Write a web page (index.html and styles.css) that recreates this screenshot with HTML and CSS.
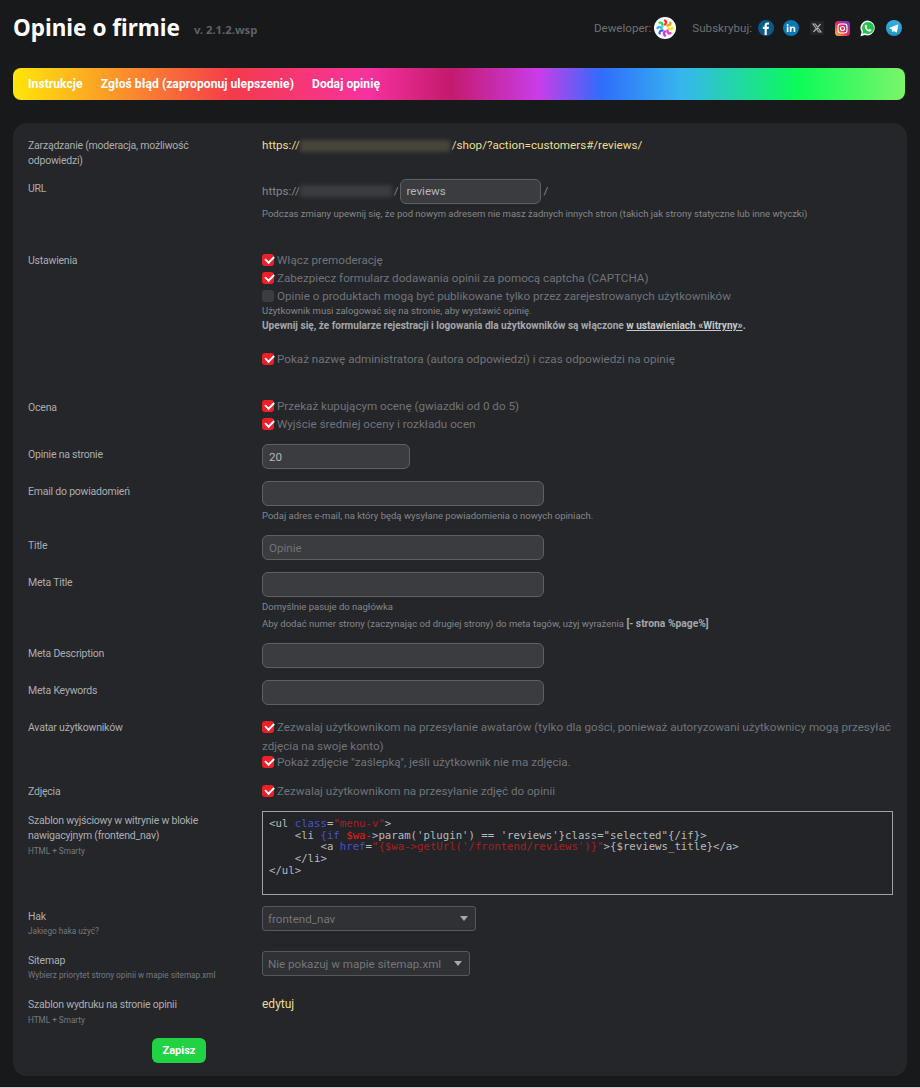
FILE: index.html
```html
<!DOCTYPE html>
<html lang="pl">
<head>
<meta charset="utf-8">
<title>Opinie o firmie</title>
<link rel="stylesheet" href="styles.css">
</head>
<body>
<div class="page">
<header class="top">
  <h1 class="title">Opinie o firmie</h1>
  <span class="version">v. 2.1.2.wsp</span>
  <div class="top-right">
    <span class="top-label">Deweloper:</span>
    <svg class="logo" width="22" height="22" viewBox="0 0 22 22">
      <circle cx="11" cy="11" r="11" fill="#fff"/>
      <g fill="none" stroke-width="2.4" stroke-linecap="round">
        <path d="M11 3.500c1.500 1 1.500 2.500 0 4" stroke="#f33"/>
        <path d="M16.300 5.700c.4 1.800-.6 2.800-2.800 2.800" stroke="#f90"/>
        <path d="M18.500 11c-1 1.500-2.500 1.500-4 0" stroke="#ee0"/>
        <path d="M16.300 16.300c-1.800.4-2.800-.6-2.800-2.800" stroke="#e3c"/>
        <path d="M11 18.500c-1.500-1-1.500-2.500 0-4" stroke="#c3e"/>
        <path d="M5.700 16.300c-.4-1.800.6-2.800 2.800-2.800" stroke="#36f"/>
        <path d="M3.500 11c1-1.500 2.500-1.500 4 0" stroke="#3be"/>
        <path d="M5.700 5.700c1.800-.4 2.800.6 2.800 2.800" stroke="#2d5"/>
      </g>
    </svg>
    <span class="top-label subs">Subskrybuj:</span>
    <svg class="soc s-fb" width="16" height="16" viewBox="0 0 16 16"><circle cx="8" cy="8" r="8" fill="#0b5a8c"/><path d="M8.800 15V9h1.900l.3-2.200H8.800V5.500c0-.7.3-1.100 1.100-1.100H11V2.500c-.3 0-.9-.1-1.600-.1-1.700 0-2.800 1-2.800 2.900v1.500H4.800V9h1.800v6z" fill="#fff"/></svg>
    <svg class="soc s-li" width="16" height="16" viewBox="0 0 16 16"><circle cx="8" cy="8" r="8" fill="#0a79b8"/><path d="M3.800 6.600h1.700V12H3.800zM4.650 3.900a1 1 0 110 2 1 1 0 010-2zM6.800 6.600h1.600v.8c.3-.5.9-.9 1.800-.9 1.600 0 2.100 1 2.100 2.500V12h-1.700V9.300c0-.7-.2-1.300-.9-1.300-.8 0-1.200.6-1.200 1.400V12H6.800z" fill="#fff"/></svg>
    <svg class="soc s-x" width="14" height="14" viewBox="0 0 14 14"><rect width="14" height="14" fill="#232426"/><path d="M3 3h2.300l5.700 8H8.700zM10.600 3L3.400 11" fill="none" stroke="#a9abae" stroke-width="1.200"/></svg>
    <svg class="soc s-ig" width="15" height="15" viewBox="0 0 15 15"><defs><linearGradient id="ig" x1="0" y1="1" x2="1" y2="0"><stop offset="0" stop-color="#fdc12c"/><stop offset=".45" stop-color="#ee2a56"/><stop offset="1" stop-color="#5a3ee0"/></linearGradient></defs><rect width="15" height="15" rx="3.500" fill="url(#ig)"/><rect x="3" y="3" width="9" height="9" rx="2.500" fill="none" stroke="#fff" stroke-width="1.100"/><circle cx="7.500" cy="7.500" r="2" fill="none" stroke="#fff" stroke-width="1.100"/></svg>
    <svg class="soc s-wa" width="16" height="17" viewBox="0 0 16 17"><path d="M8 .5a7.500 7.500 0 00-6.400 11.400L.5 16.200l4.400-1.100A7.500 7.500 0 108 .5z" fill="#fff"/><path d="M8 2a6 6 0 00-5 9.300l-.6 2.500 2.600-.6A6 6 0 108 2z" fill="#27c24c"/><path d="M5.800 4.800c-.7.300-1.200 1.100-1 2.100.4 2.200 2.200 4 4.300 4.600 1 .2 1.800-.3 2.200-1 .1-.4.100-.7 0-.8l-1.500-.8-.8.900c-1-.3-2-1.300-2.500-2.400l.7-.8-.7-1.600c-.1-.2-.4-.2-.7-.2z" fill="#fff"/></svg>
    <svg class="soc s-tg" width="16" height="16" viewBox="0 0 16 16"><defs><linearGradient id="tg" x1="0" y1="0" x2="0" y2="1"><stop offset="0" stop-color="#37aee2"/><stop offset="1" stop-color="#1e96c8"/></linearGradient></defs><circle cx="8" cy="8" r="8" fill="url(#tg)"/><path d="M3.200 8l8.500-3.400c.4-.1.700.1.600.6l-1.400 6.800c-.1.500-.4.600-.8.400L7.900 10.900l-1 1c-.2.200-.4.200-.5-.1l-.7-2.400z" fill="#fff"/></svg>
  </div>
</header>

<nav class="rainbow">
  <a class="rb-link">Instrukcje</a>
  <a class="rb-link">Zgłoś błąd (zaproponuj ulepszenie)</a>
  <a class="rb-link">Dodaj opinię</a>
</nav>

<main class="panel">
  <div class="row r-manage">
    <div class="label">Zarządzanie (moderacja, możliwość odpowiedzi)</div>
    <div class="value"><a class="yellow">https://<span class="blur b-yellow"></span>/shop/?action=customers#/reviews/</a></div>
  </div>

  <div class="row r-url">
    <div class="label">URL</div>
    <div class="value">
      <div class="url-line">https://<span class="blur b-gray"></span>/<input class="input in-url" value="reviews"><span class="slash">/</span></div>
      <p class="hint">Podczas zmiany upewnij się, że pod nowym adresem nie masz żadnych innych stron (takich jak strony statyczne lub inne wtyczki)</p>
    </div>
  </div>

  <div class="row r-settings">
    <div class="label">Ustawienia</div>
    <div class="value">
      <label class="check"><span class="box on"></span>Włącz premoderację</label>
      <label class="check"><span class="box on"></span>Zabezpiecz formularz dodawania opinii za pomocą captcha (CAPTCHA)</label>
      <label class="check"><span class="box"></span>Opinie o produktach mogą być publikowane tylko przez zarejestrowanych użytkowników</label>
      <p class="hint">Użytkownik musi zalogować się na stronie, aby wystawić opinię.</p>
      <p class="hint strong">Upewnij się, że formularze rejestracji i logowania dla użytkowników są włączone <u>w ustawieniach «Witryny»</u>.</p>
      <label class="check gap-top"><span class="box on"></span>Pokaż nazwę administratora (autora odpowiedzi) i czas odpowiedzi na opinię</label>
    </div>
  </div>

  <div class="row r-rating">
    <div class="label">Ocena</div>
    <div class="value">
      <label class="check"><span class="box on"></span>Przekaż kupującym ocenę (gwiazdki od 0 do 5)</label>
      <label class="check"><span class="box on"></span>Wyjście średniej oceny i rozkładu ocen</label>
    </div>
  </div>

  <div class="row r-perpage">
    <div class="label">Opinie na stronie</div>
    <div class="value"><input class="input in-small" value="20"></div>
  </div>

  <div class="row r-email">
    <div class="label">Email do powiadomień</div>
    <div class="value">
      <input class="input in-wide">
      <p class="hint">Podaj adres e-mail, na który będą wysyłane powiadomienia o nowych opiniach.</p>
    </div>
  </div>

  <div class="row r-title">
    <div class="label">Title</div>
    <div class="value"><input class="input in-wide" placeholder="Opinie"></div>
  </div>

  <div class="row r-meta">
    <div class="label">Meta Title</div>
    <div class="value">
      <input class="input in-wide">
      <p class="hint">Domyślnie pasuje do nagłówka</p>
      <p class="hint tall">Aby dodać numer strony (zaczynając od drugiej strony) do meta tagów, użyj wyrażenia <b>[- strona %page%]</b></p>
    </div>
  </div>

  <div class="row r-desc">
    <div class="label">Meta Description</div>
    <div class="value"><input class="input in-wide"></div>
  </div>

  <div class="row r-keys">
    <div class="label">Meta Keywords</div>
    <div class="value"><input class="input in-wide"></div>
  </div>

  <div class="row r-avatar">
    <div class="label">Avatar użytkowników</div>
    <div class="value">
      <label class="check wrap"><span class="box on"></span>Zezwalaj użytkownikom na przesyłanie awatarów (tylko dla gości, ponieważ autoryzowani użytkownicy mogą przesyłać zdjęcia na swoje konto)</label>
      <label class="check"><span class="box on"></span>Pokaż zdjęcie "zaślepką", jeśli użytkownik nie ma zdjęcia.</label>
    </div>
  </div>

  <div class="row r-photos">
    <div class="label">Zdjęcia</div>
    <div class="value"><label class="check"><span class="box on"></span>Zezwalaj użytkownikom na przesyłanie zdjęć do opinii</label></div>
  </div>

  <div class="row r-code">
    <div class="label">Szablon wyjściowy w witrynie w blokie nawigacyjnym (frontend_nav)<small class="sub">HTML + Smarty</small></div>
    <div class="value">
<pre class="code">&lt;ul <span class="k">class</span>=<span class="s">"menu-v"</span>&gt;
    &lt;li <span class="k">{if</span> <span class="v">$wa-</span>&gt;param('plugin') == 'reviews'}class="selected"{/if}&gt;
        &lt;a <span class="k">href</span>=<span class="s">"{$wa-&gt;getUrl('/frontend/reviews')}"</span>&gt;{$reviews_title}&lt;/a&gt;
    &lt;/li&gt;
&lt;/ul&gt;</pre>
    </div>
  </div>

  <div class="row r-hook">
    <div class="label">Hak<small class="sub">Jakiego haka użyć?</small></div>
    <div class="value"><div class="select sel-hook">frontend_nav<span class="caret"></span></div></div>
  </div>

  <div class="row r-sitemap">
    <div class="label">Sitemap<small class="sub">Wybierz priorytet strony opinii w mapie sitemap.xml</small></div>
    <div class="value"><div class="select sel-map">Nie pokazuj w mapie sitemap.xml<span class="caret"></span></div></div>
  </div>

  <div class="row r-print">
    <div class="label">Szablon wydruku na stronie opinii<small class="sub">HTML + Smarty</small></div>
    <div class="value"><a class="yellow edit">edytuj</a></div>
  </div>

  <div class="actions"><button class="save">Zapisz</button></div>
</main>
</div>
</body>
</html>
```
FILE: styles.css
```css
* { box-sizing: border-box; }
html, body { margin: 0; padding: 0; }
body {
  background: #18191b;
  color: #a5a7ab;
  font-family: Roboto, "Noto Sans", "Liberation Sans", sans-serif;
  font-size: 11px;
  height: 1088px;
  overflow: hidden;
  border-bottom: 1px solid #c8c9ca;
}
.page { padding: 0 13px; }
.top { display: flex; align-items: center; height: 68px; padding-bottom: 12px; }
.title { margin: 0; font-family: "Noto Sans", sans-serif; font-size: 22.500px; line-height: 30px; font-weight: 700; color: #fff; }
.version { margin-left: 14px; margin-top: 3px; font-family: "Noto Sans", sans-serif; font-size: 11.300px; font-weight: 700; color: #5f6164; }
.top-right { margin-left: auto; display: flex; align-items: center; padding-right: 5px; }
.top-label { font-size: 11.600px; color: #6e7074; }
.logo { margin-left: 3px; }
.subs { margin-left: 16px; }
.s-fb { margin-left: 6px; }
.s-li { margin-left: 9px; }
.s-x { margin-left: 11px; }
.s-ig { margin-left: 11px; }
.s-wa { margin-left: 10px; }
.s-tg { margin-left: 10px; }
.rainbow {
  display: flex; align-items: center; gap: 18px;
  height: 32px; width: 892px; padding-left: 15px;
  border-radius: 8px;
  background: linear-gradient(90deg, #ffe60a 0, #f53a4c 24.700%, #f7329f 39.700%, #c41a6c 49%, #c93dea 59%, #2f6dfb 66%, #37b6ee 75%, #0bfb58 88%, #7cf56a 100%);
}
.rb-link { color: #fff; font-size: 12.100px; font-weight: 700; letter-spacing: .05px; }
.panel {
  margin-top: 23px;
  width: 894px; height: 953px;
  padding: 12px 15px 0;
  background: #242629;
  border-radius: 14px;
}
.row { display: grid; grid-template-columns: 234px 1fr; }
.label { font-size: 10.500px; letter-spacing: -.22px; line-height: 15px; color: #abadb1; padding: 2px 30px 0 0; }
.sub { display: block; font-size: 8.200px; letter-spacing: 0; line-height: 15px; color: #77797d; }
.value { font-size: 11.650px; line-height: 18px; color: #70737a; }
.r-manage { height: 44px; padding-top: 1px; }
.r-url { height: 72px; }
.r-settings { height: 146px; }
.r-rating { height: 48px; }
.r-rating .label { padding-top: 3px; }
.r-perpage { height: 37px; }
.r-email { height: 54px; }
.r-title { height: 37px; }
.r-meta { height: 71px; }
.r-desc { height: 37px; }
.r-keys { height: 37px; }
.r-avatar { height: 64px; }
.r-photos { height: 29px; }
.r-code { height: 95px; }
.r-code .sub, .r-print .sub { margin-top: 1px; }
.r-hook .label { padding-top: 3px; }
.r-hook { height: 45px; }
.r-sitemap { height: 44px; }
.r-print { height: 40px; }
.yellow { color: #eadf8f; }
.blur { display: inline-block; vertical-align: middle; height: 12px; filter: blur(2px); }
.b-yellow { width: 150px; background: #46463b; margin: 0 2px 0 0; }
.b-gray { width: 92px; background: #3c3d42; margin: 0 2px 0 0; }
.url-line { display: flex; align-items: center; height: 24px; color: #85878c; }
.url-line .input { margin-left: 1px; margin-top: 0; }
.slash { margin-left: 3px; }
.hint { margin: 0; font-size: 9.500px; line-height: 14px; color: #85878b; }
.r-url .hint { margin-top: 4px; }
.tall { margin-top: 3px; }
.r-settings .hint:first-of-type { margin-top: -1px; }
.strong { font-size: 10.050px; line-height: 15px; font-weight: 700; color: #a5a7ab; }
.strong u { color: #c5c7ca; }
.hint b { font-size: 10.300px; color: #a5a7ab; }
.check { display: flex; align-items: center; line-height: 18px; }
.check.wrap { display: block; line-height: 19px; height: 35px; }
.check.wrap .box { display: inline-block; vertical-align: -2px; }
.gap-top { margin-top: 17px; }
.box {
  flex: none; position: relative;
  width: 12px; height: 12px; margin-right: 3px;
  border-radius: 3px; background: #3b3d40;
}
.box.on { background: #ee1f28; }
.box.on::after {
  content: ""; position: absolute; left: 2.500px; top: 1.500px;
  width: 6.500px; height: 3.500px;
  border-left: 2px solid #fff; border-bottom: 2px solid #fff;
  transform: rotate(-45deg);
}
.input {
  display: block; height: 25px; margin-top: -1px; padding: 0 6px;
  background: #3a3c3f; border: 1px solid #5e6063; border-radius: 6px;
  color: #b5b7ba; font: 11.600px Roboto, "Noto Sans", sans-serif; outline: none;
}
.input::placeholder { color: #6f7277; }
.in-url { width: 141px; }
.in-small { width: 148px; }
.in-wide { width: 282px; }
.r-email .hint { margin-top: 3px; }
.r-meta .hint:first-of-type { margin-top: 3px; }
.code {
  margin: 0; width: 631px; height: 84px; padding: 6px 6px;
  border: 1px solid #a0a2a5;
  background: #222427;
  color: #b8babd;
  font: 10.700px/11.700px "DejaVu Sans Mono", "Liberation Mono", monospace;
}
.k { color: #4a4fd0; }
.s { color: #a82020; }
.v { color: #e02020; }
.select {
  display: flex; align-items: center; justify-content: space-between;
  height: 25px; padding: 0 7px 0 5px;
  background: #2f3134; border: 1px solid #56585b; border-radius: 3px;
  color: #74767a; font-size: 11.600px; white-space: nowrap;
}
.sel-hook { width: 214px; }
.sel-map { width: 208px; }
.caret { width: 0; height: 0; border: 4.500px solid transparent; border-top: 5px solid #a5a7ab; border-bottom: 0; }
.edit { font-size: 12px; }
.actions { padding-left: 124px; padding-top: 3px; }
.save {
  width: 54px; height: 25px; padding: 0;
  background: #22d245; border: 0; border-radius: 6px;
  color: #fff; font: 700 11px Roboto, "Noto Sans", sans-serif;
}
```
